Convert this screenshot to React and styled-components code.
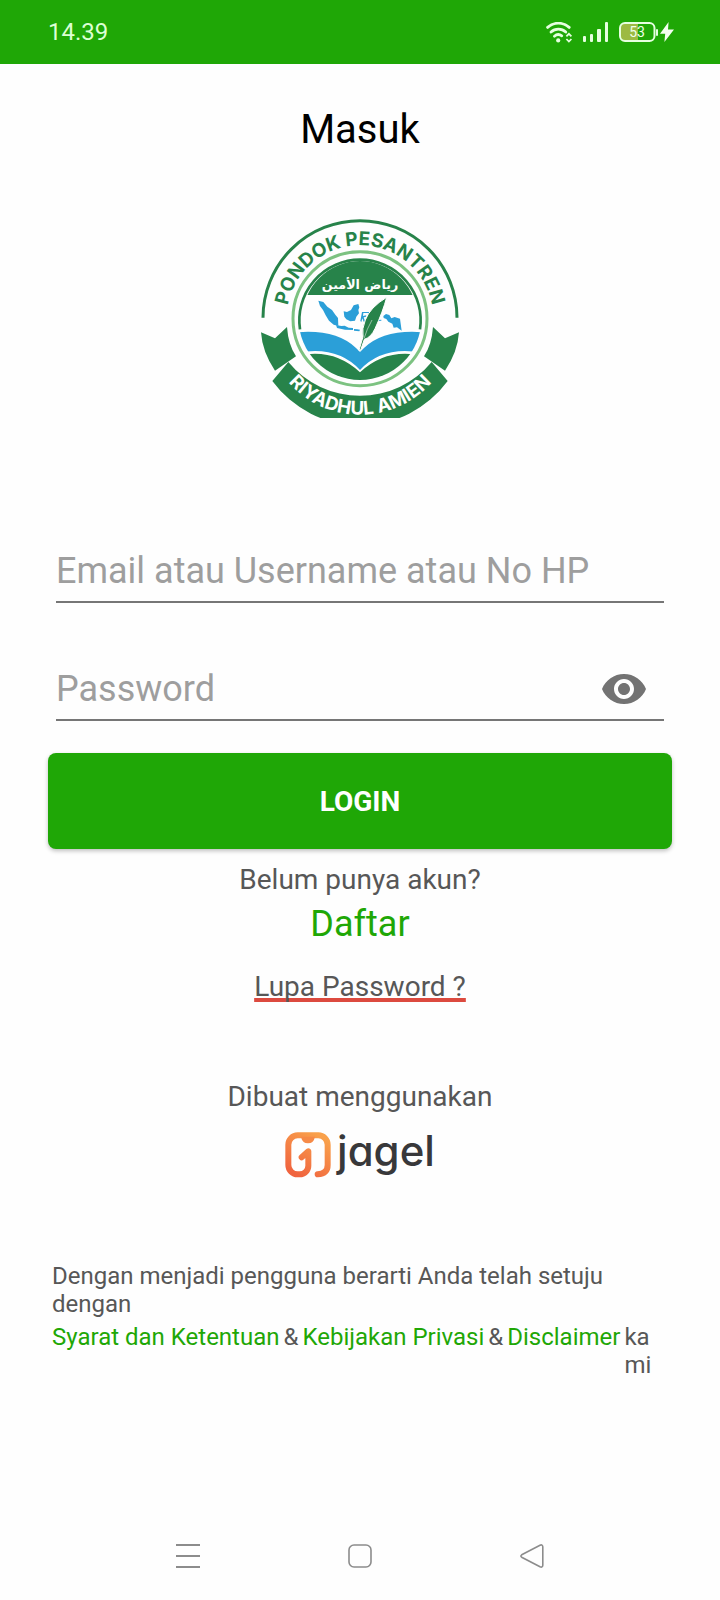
import React, { useState } from "react";
import styled, { createGlobalStyle } from "styled-components";

const GREEN = "#1fa706";
const LOGO_GREEN = "#27834a";
const LOGO_BLUE = "#2b9fd8";

const WifiIcon = () => (
  <svg width="27" height="21" viewBox="0 0 27 21" fill="none" aria-hidden="true">
    <g stroke="#e6ffe0" strokeWidth="2.8" strokeLinecap="round">
      <path d="M1.6 5.4a16 16 0 0 1 21.6 0" />
      <path d="M5 10a11 11 0 0 1 14.8 0" />
      <path d="M8.4 14.2a6 6 0 0 1 7.4-.4" />
    </g>
    <circle cx="12.2" cy="18.4" r="2.1" fill="#e6ffe0" />
    <path d="M20.4 14.4l2.5-2.6 2.5 2.6M20.4 17l2.5 2.6 2.5-2.6" stroke="#e6ffe0" strokeWidth="1.7" />
  </svg>
);

const SignalIcon = () => (
  <svg width="26" height="20" viewBox="0 0 26 20" fill="#e6ffe0" aria-hidden="true">
    <rect x="0" y="14" width="3" height="6" rx="1" />
    <rect x="7" y="12" width="3" height="8" rx="1" />
    <rect x="14" y="7" width="4" height="13" rx="1" />
    <rect x="22" y="0" width="3" height="20" rx="1" />
  </svg>
);

const BatteryIcon = () => (
  <svg width="39" height="20" viewBox="0 0 39 20" aria-hidden="true">
    <path d="M6 1h13v18H6a5 5 0 0 1-5-5V6a5 5 0 0 1 5-5z" fill="#9cba42" />
    <rect x="1" y="1" width="34.5" height="18" rx="5" fill="none" stroke="#e6ffe0" strokeWidth="2" />
    <rect x="37" y="7" width="2" height="7" rx="1" fill="#e6ffe0" />
    <text x="18" y="15" textAnchor="middle" fontFamily="Roboto, sans-serif" fontSize="14" fill="#f0ffe8">
      53
    </text>
  </svg>
);

const BoltIcon = () => (
  <svg width="14" height="20" viewBox="0 0 14 20" fill="#f4fff0" aria-hidden="true">
    <path d="M8.600 0L0 11.800h5.200L4.400 20 14 7.400H8z" />
  </svg>
);

const EyeIcon = () => (
  <svg width="44" height="30" viewBox="0 0 22 15" fill="#737373" aria-hidden="true">
    <path d="M11 0C6 0 1.730 3.110 0 7.500c1.730 4.390 6 7.500 11 7.500s9.270-3.110 11-7.500C20.270 3.110 16 0 11 0zm0 12.500c-2.760 0-5-2.240-5-5s2.240-5 5-5 5 2.240 5 5-2.240 5-5 5zm0-8c-1.660 0-3 1.340-3 3s1.340 3 3 3 3-1.340 3-3-1.340-3-3-3z" />
  </svg>
);

const SchoolLogo = () => (
  <svg width="200" height="200" viewBox="30 24 600 600" role="img" aria-label="Pondok Pesantren Riyadhul Amien">
    <defs>
      <path id="topText" d="M110 326a220 220 0 0 1 440 0" />
      <path id="bottomText" d="M42 326a288 288 0 0 0 576 0" />
      <clipPath id="disc">
        <circle cx="330" cy="326" r="184" />
      </clipPath>
      <clipPath id="innerDisc">
        <circle cx="330" cy="326" r="173" />
      </clipPath>
    </defs>

    <path d="M39 323a291 291 0 0 1 582 0" fill="none" stroke={LOGO_GREEN} strokeWidth="9" />
    <circle cx="330" cy="326" r="201" fill="none" stroke="#7cc281" strokeWidth="9" />
    <path d="M150 358a182 182 0 1 1 360 0" fill="none" stroke={LOGO_GREEN} strokeWidth="8" />
    <rect x="150" y="140" width="360" height="115" fill={LOGO_GREEN} clipPath="url(#innerDisc)" />

    {/* map */}
    <g fill={LOGO_BLUE}>
      <path d="M205 272l15 4 12 14 14 10 10 14 8 10 1 24-14-4-14-12-10-16-8-16-9-12z" />
      <path d="M258 345l16 3 10-1 12 6 13 1v6l-24-1-24-5zM312 357l10 1 8 1-2 5-16-2z" />
      <path d="M281 304l10 2 12-6 8-14 14-4 3 10-3 8 2 10-8 10-4 12-14 2-12-6-6-8z" />
      <path d="M336 306h24v3h-20l-1 9 10-2-2 5-6 1 4 12-4 1-4-10-3 11-3-3z" />
      <path d="M340 358l16-4 4 3-16 5zM378 308l4-5 2 9-4 5zM382 330l12-1v3l-12 1z" />
      <path d="M400 318l8-6 10 3 6 10 10-4 16 5 5 36-14-10-10 1-4-12-12-6-6-8-8-3z" />
    </g>

    {/* open book */}
    <g clipPath="url(#disc)">
      <path d="M140 367q118-10 178 47l12 12 12-12q60-57 178-47v62q-120-24-190 51-70-75-190-51z" fill={LOGO_BLUE} />
      <path d="M140 438q110-26 190 49 80-75 190-49v100H140z" fill={LOGO_GREEN} />
    </g>

    {/* quill */}
    <path
      d="M410 262q-50 30-64 68-11 27-7 50l-10 34-2 8 5-2 11-32q20-6 32-32 24-52 35-94z"
      fill={LOGO_GREEN}
      stroke="#fff"
      strokeWidth="3"
    />
    <path d="M366 330q-16 28-24 56" fill="none" stroke="#fff" strokeWidth="1.5" />

    {/* ribbon */}
    <g fill={LOGO_GREEN}>
      <path d="M33 367l42 18 36-34q4 54 27 88l-63 43q-38-56-42-115z" />
      <path d="M627 367l-42 18-36-34q-4 54-27 88l63 43q38-56 42-115z" />
      <path d="M115 456a279 279 0 0 0 430 0l48 57a326 326 0 0 1-526 0z" />
    </g>

    <LogoText fill={LOGO_GREEN} fontSize="57">
      <textPath href="#topText" startOffset="50%" textAnchor="middle">
        PONDOK PESANTREN
      </textPath>
    </LogoText>
    <LogoText fill="#fff" fontSize="56">
      <textPath href="#bottomText" startOffset="50%" textAnchor="middle">
        RIYADHUL AMIEN
      </textPath>
    </LogoText>
    <text
      x="330"
      y="236"
      textAnchor="middle"
      fontFamily="'DejaVu Sans', sans-serif"
      fontSize="38"
      fontWeight="700"
      fill="#fff"
    >
      رياض الأمين
    </text>
  </svg>
);

const JagelMark = () => (
  <svg width="46" height="46" viewBox="0 0 138 138" fill="none" aria-hidden="true">
    <defs>
      <linearGradient id="jagel" x1="0.8" y1="0" x2="0.2" y2="1">
        <stop offset="0" stopColor="#f9a14b" />
        <stop offset="1" stopColor="#f0643f" />
      </linearGradient>
    </defs>
    <path
      d="M50 76l20-18v43a26 26 0 0 1-26 26h-6a28 28 0 0 1-28-28V38a28 28 0 0 1 28-28h62a28 28 0 0 1 28 28v61q0 26-30 28"
      stroke="url(#jagel)"
      strokeWidth="18"
      strokeLinecap="round"
      strokeLinejoin="round"
    />
    <path d="M48 14h42q-4 20-21 20T48 14z" fill="#f68a47" />
  </svg>
);

const MenuIcon = () => (
  <svg width="24" height="24" viewBox="0 0 24 24" stroke="#8c8c8c" strokeWidth="2" aria-hidden="true">
    <path d="M0 1h24M0 12h24M0 23h24" />
  </svg>
);

const HomeIcon = () => (
  <svg width="24" height="24" viewBox="0 0 24 24" fill="none" stroke="#8c8c8c" strokeWidth="1.6" aria-hidden="true">
    <rect x="1" y="1" width="22" height="22" rx="5" />
  </svg>
);

const BackIcon = () => (
  <svg width="24" height="24" viewBox="0 0 24 24" fill="none" stroke="#8c8c8c" strokeWidth="1.6" aria-hidden="true">
    <path d="M1.700 10.800L20 1.200q2.600-1 2.800 1.600v18.400q-.2 2.600-2.800 1.600L1.700 13.200q-1.600-1.200 0-2.400z" />
  </svg>
);

export default function App() {
  const [login, setLogin] = useState("");
  const [password, setPassword] = useState("");
  const [visible, setVisible] = useState(false);

  return (
    <Page>
      <GlobalStyle />
      <StatusBar>
        <Time>14.39</Time>
        <StatusIcons>
          <WifiIcon />
          <SignalIcon />
          <Battery>
            <BatteryIcon />
            <BoltIcon />
          </Battery>
        </StatusIcons>
      </StatusBar>

      <Content>
        <Title>Masuk</Title>
        <SchoolLogo />

        <Form onSubmit={(e) => e.preventDefault()}>
          <Field>
            <Input
              aria-label="Email atau Username atau No HP"
              placeholder="Email atau Username atau No HP"
              value={login}
              onChange={(e) => setLogin(e.target.value)}
            />
          </Field>
          <Field>
            <Input
              type={visible ? "text" : "password"}
              aria-label="Password"
              placeholder="Password"
              value={password}
              onChange={(e) => setPassword(e.target.value)}
            />
            <IconButton type="button" aria-label="Lihat password" onClick={() => setVisible(!visible)}>
              <EyeIcon />
            </IconButton>
          </Field>
          <LoginButton type="submit">LOGIN</LoginButton>
        </Form>

        <Account>
          <Text>Belum punya akun?</Text>
          <RegisterLink href="#daftar">Daftar</RegisterLink>
          <ForgotLink href="#lupa">Lupa Password ?</ForgotLink>
        </Account>

        <MadeWith>
          <Text>Dibuat menggunakan</Text>
          <Brand>
            <JagelMark />
            <BrandName>jagel</BrandName>
          </Brand>
        </MadeWith>

        <Legal>
          <p>Dengan menjadi pengguna berarti Anda telah setuju dengan</p>
          <LegalLinks>
            <LegalLink href="#syarat">Syarat dan Ketentuan</LegalLink>
            <span>&amp;</span>
            <LegalLink href="#privasi">Kebijakan Privasi</LegalLink>
            <span>&amp;</span>
            <LegalLink href="#disclaimer">Disclaimer</LegalLink>
            <LastWord>kami</LastWord>
          </LegalLinks>
        </Legal>
      </Content>

      <NavBar>
        <IconButton type="button" aria-label="Menu">
          <MenuIcon />
        </IconButton>
        <IconButton type="button" aria-label="Beranda">
          <HomeIcon />
        </IconButton>
        <IconButton type="button" aria-label="Kembali">
          <BackIcon />
        </IconButton>
      </NavBar>
    </Page>
  );
}

const GlobalStyle = createGlobalStyle`
  * {
    box-sizing: border-box;
  }

  body {
    margin: 0;
    background: #fefefe;
    color: #575757;
    font-family: Roboto, "Liberation Sans", sans-serif;
  }

  p, h1 {
    margin: 0;
  }

  svg {
    display: block;
    flex: none;
  }
`;

const Page = styled.div`
  display: flex;
  flex-direction: column;
  min-height: 100vh;
`;

const StatusBar = styled.header`
  display: flex;
  align-items: center;
  justify-content: space-between;
  height: 64px;
  padding: 0 46px 0 48px;
  background: ${GREEN};
`;

const Time = styled.span`
  color: #dcffd4;
  font-size: 24px;
  line-height: 28px;
`;

const StatusIcons = styled.div`
  display: flex;
  align-items: center;
  gap: 10px;
`;

const Battery = styled.div`
  display: flex;
  align-items: center;
  gap: 2px;
`;

const Content = styled.main`
  display: flex;
  flex-direction: column;
  align-items: center;
  padding: 42px 48px 0;
`;

const Title = styled.h1`
  margin-bottom: 64px;
  color: #000;
  font-size: 40px;
  font-weight: 400;
  line-height: 48px;
`;

const LogoText = styled.text`
  font-family: Inter, sans-serif;
  font-weight: 700;
`;

const Form = styled.form`
  display: flex;
  flex-direction: column;
  width: 100%;
  margin-top: 129px;
`;

const Field = styled.div`
  display: flex;
  align-items: center;
  height: 56px;
  margin: 0 8px 62px;
  padding: 0 18px 6px 0;
  border-bottom: 2px solid #767676;

  & + & {
    margin-bottom: 32px;
  }
`;

const Input = styled.input`
  flex: 1;
  min-width: 0;
  padding: 0;
  border: 0;
  outline: 0;
  background: none;
  color: #333;
  font-family: inherit;
  font-size: 36px;
  line-height: 44px;

  &::placeholder {
    color: #9e9e9e;
  }
`;

const IconButton = styled.button`
  padding: 0;
  border: 0;
  background: none;
  cursor: pointer;
`;

const LoginButton = styled.button`
  height: 96px;
  border: 0;
  border-radius: 8px;
  background: ${GREEN};
  box-shadow: 0 2px 4px rgba(0, 0, 0, 0.25);
  color: #fff;
  font-family: inherit;
  font-size: 28px;
  font-weight: 700;
  cursor: pointer;
`;

const Account = styled.section`
  display: flex;
  flex-direction: column;
  align-items: center;
  margin-top: 14px;
`;

const Text = styled.p`
  font-size: 28px;
  line-height: 34px;
`;

const RegisterLink = styled.a`
  margin: 6px 0 25px;
  color: ${GREEN};
  font-size: 36px;
  line-height: 42px;
  text-decoration: none;
`;

const ForgotLink = styled.a`
  color: inherit;
  font-size: 28px;
  line-height: 34px;
  text-decoration: underline 4px #dc4a3f;
  text-decoration-skip-ink: none;
  text-underline-offset: 2px;
`;

const MadeWith = styled.section`
  display: flex;
  flex-direction: column;
  align-items: center;
  gap: 18px;
  margin-top: 76px;
`;

const Brand = styled.div`
  display: flex;
  align-items: flex-start;
  gap: 6px;
`;

const BrandName = styled.span`
  color: #38383a;
  font-family: Inter, sans-serif;
  font-size: 42px;
  font-weight: 500;
  font-feature-settings: "cv11";
  line-height: 38px;
`;

const Legal = styled.section`
  align-self: stretch;
  margin-top: 84px;
  padding: 0 4px;
  font-size: 24px;
  line-height: 28px;
`;

const LegalLinks = styled.div`
  display: flex;
  gap: 4px;
  margin-top: 5px;
`;

const LegalLink = styled.a`
  flex: none;
  color: ${GREEN};
  text-decoration: none;
`;

const LastWord = styled.span`
  flex: 1;
  min-width: 0;
  max-width: 42px;
  word-break: break-all;
`;

const NavBar = styled.nav`
  display: flex;
  align-items: center;
  justify-content: space-between;
  height: 88px;
  margin-top: auto;
  padding: 0 176px;
`;
